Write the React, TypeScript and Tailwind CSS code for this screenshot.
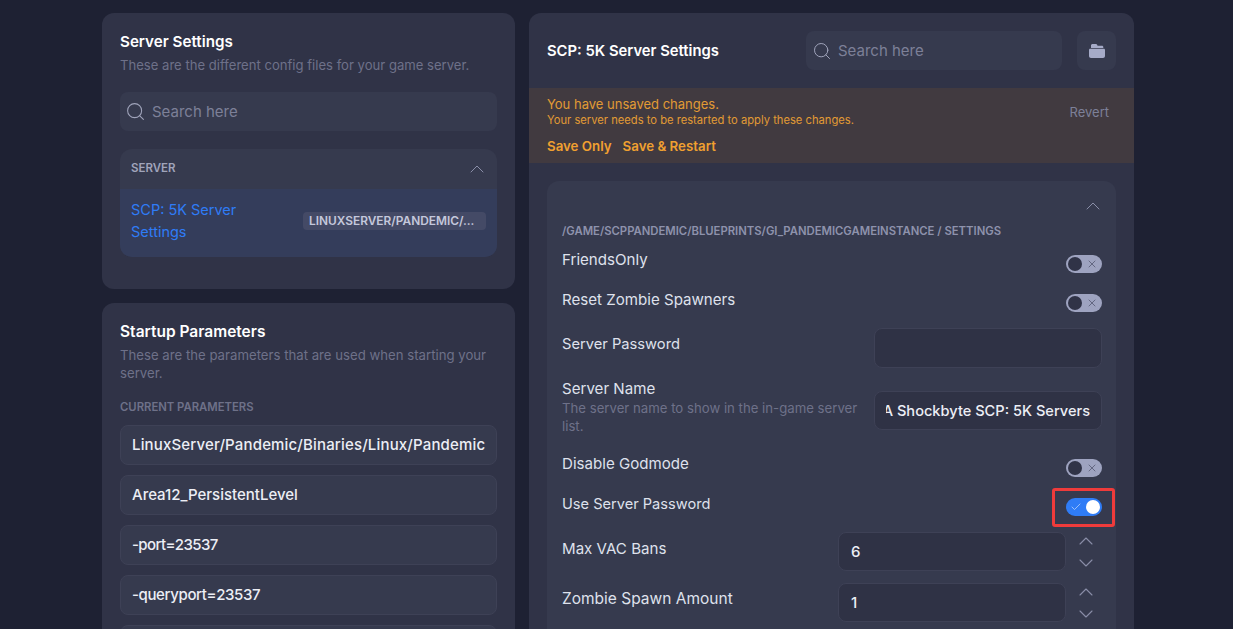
import React from 'react';
import { Search, ChevronUp, ChevronDown, X, Check } from 'lucide-react';

const FONT = 'font-["Inter","Noto_Sans",sans-serif]';

const PARAMS = [
  { text: 'LinuxServer/Pandemic/Binaries/Linux/Pandemic', cls: 'tracking-[0.16px]' },
  { text: 'Area12_PersistentLevel', cls: '' },
  { text: '-port=23537', cls: 'tracking-[-0.6px]' },
  { text: '-queryport=23537', cls: 'tracking-[-0.37px]' },
  { text: '', cls: '' },
];

const Toggle = ({ on = false }: { on?: boolean }) =>
  on ? (
    <div className="flex h-[18px] w-9 shrink-0 items-center justify-between rounded-full bg-[#2f7cf6] pl-[4px] pr-[2px]">
      <Check size={12} strokeWidth={1.4} className="text-[#c9dcfb]" />
      <div className="h-[14px] w-[14px] rounded-full bg-white" />
    </div>
  ) : (
    <div className="flex h-[18px] w-9 shrink-0 items-center justify-between rounded-full bg-[#9ea3c0] pl-[2px] pr-[4px]">
      <div className="h-[14px] w-[14px] rounded-full bg-[#303347]" />
      <X size={12} strokeWidth={1.4} className="text-[#4a4d66]" />
    </div>
  );

const Stepper = ({ value }: { value: string }) => (
  <div className="flex h-[39px] items-start gap-[8px] pr-[4px]">
    <div className="flex h-[39px] w-[228px] items-center rounded-lg border border-[#3e4156] bg-[#2f3245] px-3 text-[15px] font-medium text-[#eceef5]">
      {value}
    </div>
    <div className="-mt-[3px] flex flex-col items-center text-[#8a8ea8]">
      <ChevronUp size={24} strokeWidth={1.1} className="-mb-[2px]" />
      <ChevronDown size={24} strokeWidth={1.1} />
    </div>
  </div>
);

const SearchBox = ({ className, iconSize }: { className: string; iconSize: number }) => (
  <div className={`flex items-center rounded-lg bg-[#363a4e] ${className}`}>
    <Search size={iconSize} strokeWidth={1.2} className="shrink-0 text-[#a0a4bb]" />
    <span className="ml-[6px] mt-[1px] text-[15px] text-[#7d8098]">Search here</span>
  </div>
);

const CollapseIcon = () => (
  <div className="flex h-[17px] w-[24px] items-center justify-center">
    <ChevronUp size={24} strokeWidth={1} className="shrink-0 text-[#8a8ea8]" />
  </div>
);

export default function App() {
  return (
    <div className={`${FONT} h-[629px] overflow-hidden bg-[#1e2133] pl-[102px] pt-[13px]`}>
      <div className="flex w-[1032px] items-start gap-[14px]">
        {/* left column */}
        <div className="flex w-[413px] shrink-0 flex-col gap-[14px]">
          <div className="h-[276px] rounded-xl bg-[#303347] px-[18px] pt-[20px]">
            <h2 className="text-[15.2px] font-semibold leading-[18px] text-white">Server Settings</h2>
            <p className="mt-[5px] whitespace-nowrap text-[13.1px] leading-[18px] text-[#6e7189]">These are the different config files for your game server.</p>
            <SearchBox className="mt-[18px] h-[39px] px-[5px]" iconSize={21} />
            <div className="mt-[18px] overflow-hidden rounded-xl bg-[#363a4e]">
              <div className="flex h-[40px] items-center justify-between pl-[11px] pr-[8px]">
                <span className="text-[11.5px] font-semibold text-[#a0a4bb]">SERVER</span>
                <CollapseIcon />
              </div>
              <div className="flex h-[68px] items-center justify-between bg-[#343d5b] px-[11px] pb-[4px]">
                <span className="w-[140px] text-[14.5px] leading-[22px] text-[#2f7cf6]">SCP: 5K Server Settings</span>
                <span className="flex h-[18px] w-[183px] items-center whitespace-nowrap rounded bg-[#444a66] px-[6px] text-[11.9px] font-semibold text-[#c4c8dc]">
                  LINUXSERVER/PANDEMIC/...
                </span>
              </div>
            </div>
          </div>

          <div className="h-[400px] rounded-xl bg-[#303347] px-[18px] pt-[20px]">
            <h2 className="text-[15.5px] font-semibold leading-[18px] text-white">Startup Parameters</h2>
            <p className="mt-[5px] text-[13.2px] leading-[18px] text-[#6e7189]">
              These are the parameters that are used when starting your server.
            </p>
            <div className="mt-[18px] text-[11.3px] font-semibold leading-[14px] text-[#6e7189]">CURRENT PARAMETERS</div>
            <div className="mt-[11px] flex flex-col gap-[10px]">
              {PARAMS.map((p, i) => (
                <div key={i} className={`flex h-[40px] items-center whitespace-nowrap rounded-lg border border-[#3e4156] bg-[#363a4e] px-[11px] text-[15px] font-medium text-[#eceef5] ${p.cls}`}>
                  {p.text}
                </div>
              ))}
            </div>
          </div>
        </div>

        {/* right column */}
        <div className="h-[640px] w-[605px] shrink-0 overflow-hidden rounded-xl bg-[#303347]">
          <div className="flex h-[75px] items-center px-[18px]">
            <h2 className="mt-[1px] w-[259px] text-[14.8px] font-semibold text-white">SCP: 5K Server Settings</h2>
            <SearchBox className="h-[39px] w-[256px] px-[6px]" iconSize={20} />
            <div className="ml-[15px] flex h-[39px] w-[39px] items-center justify-center rounded-lg bg-[#363a4e]">
              <svg width="16" height="14" viewBox="0 0 16 14" fill="#a6abc8">
                <path d="M2 4V1.5C2 .7 2.7 0 3.5 0H7c.5 0 .9.3 1.1.7l.5 1.1H13c.8 0 1.3.6 1.3 1.2V4H2z" />
                <path d="M0 6c0-.8.6-1.2 1.2-1.2h13.6c.6 0 1.2.4 1.2 1.2v6c0 1.1-.9 2-2 2H2c-1.1 0-2-.9-2-2V6z" />
              </svg>
            </div>
          </div>

          <div className="flex h-[75px] items-start justify-between bg-[#413a40] pl-[18px] pr-[25px] pt-[8px]">
            <div>
              <div className="text-[13px] leading-[16px] text-[#e29a34]">You have unsaved changes.</div>
              <div className="mt-[1px] text-[11.2px] leading-[15px] text-[#e29a34]">Your server needs to be restarted to apply these changes.</div>
              <div className="mt-[10px] flex gap-[11px] text-[13.3px] font-semibold leading-[16px] text-[#f0a030]">
                <span>Save Only</span>
                <span>Save &amp; Restart</span>
              </div>
            </div>
            <span className="mt-[7px] text-[13px] text-[#7d8098]">Revert</span>
          </div>

          <div className="mx-[18px] mt-[18px] rounded-xl bg-[#363a4e] pb-[40px] pl-[15px] pr-[14px] pt-[16px] text-[15.1px] leading-[18px] text-[#dfe1ec]">
            <div className="flex justify-end">
              <div className="-mr-[3px]"><CollapseIcon /></div>
            </div>
            <div className="mt-[10px] whitespace-nowrap text-[11.3px] font-semibold leading-[14px] text-[#8e92ac]">
              /GAME/SCPPANDEMIC/BLUEPRINTS/GI_PANDEMICGAMEINSTANCE / SETTINGS
            </div>

            <div className="mt-[13px] flex h-[18px] items-start justify-between">
              <span>FriendsOnly</span>
              <div className="mt-[4px]"><Toggle /></div>
            </div>
            <div className="mt-[22px] flex h-[18px] items-start justify-between">
              <span>Reset Zombie Spawners</span>
              <div className="mt-[3px]"><Toggle /></div>
            </div>

            <div className="mt-[19px] flex items-start justify-between">
              <span className="mt-[7px] text-[14.7px]">Server Password</span>
              <div className="h-[40px] w-[228px] rounded-lg border border-[#3e4156] bg-[#2f3245]" />
            </div>

            <div className="mt-[12px] flex items-start justify-between">
              <div className="w-[300px]">
                <div>Server Name</div>
                <div className="mt-[1px] text-[13.2px] text-[#6e7189]">The server name to show in the in-game server list.</div>
              </div>
              <div className="mt-[11px] flex h-[39px] w-[228px] items-center rounded-lg border border-[#3e4156] bg-[#2f3245] px-[11px] text-[14.6px] font-medium text-[#eceef5]">
                <div className="flex w-full justify-end overflow-hidden whitespace-nowrap">A Shockbyte SCP: 5K Servers</div>
              </div>
            </div>

            <div className="mt-[20px] flex h-[18px] items-start justify-between">
              <span>Disable Godmode</span>
              <div className="mt-[4px]"><Toggle /></div>
            </div>
            <div className="relative mt-[22px] flex h-[18px] items-start justify-between">
              <span className="text-[14.6px]">Use Server Password</span>
              <div className="mt-[3px]"><Toggle on /></div>
              <div className="absolute right-[-13px] top-[-7px] h-[39px] w-[63px] rounded-[3px] border-[3px] border-[#ef3b3b]" />
            </div>

            <div className="mt-[19px] flex items-start justify-between">
              <span className="mt-[8px]">Max VAC Bans</span>
              <Stepper value="6" />
            </div>
            <div className="mt-[12px] flex items-start justify-between">
              <span className="mt-[7px] text-[15.5px]">Zombie Spawn Amount</span>
              <Stepper value="1" />
            </div>
          </div>
        </div>
      </div>
    </div>
  );
}
